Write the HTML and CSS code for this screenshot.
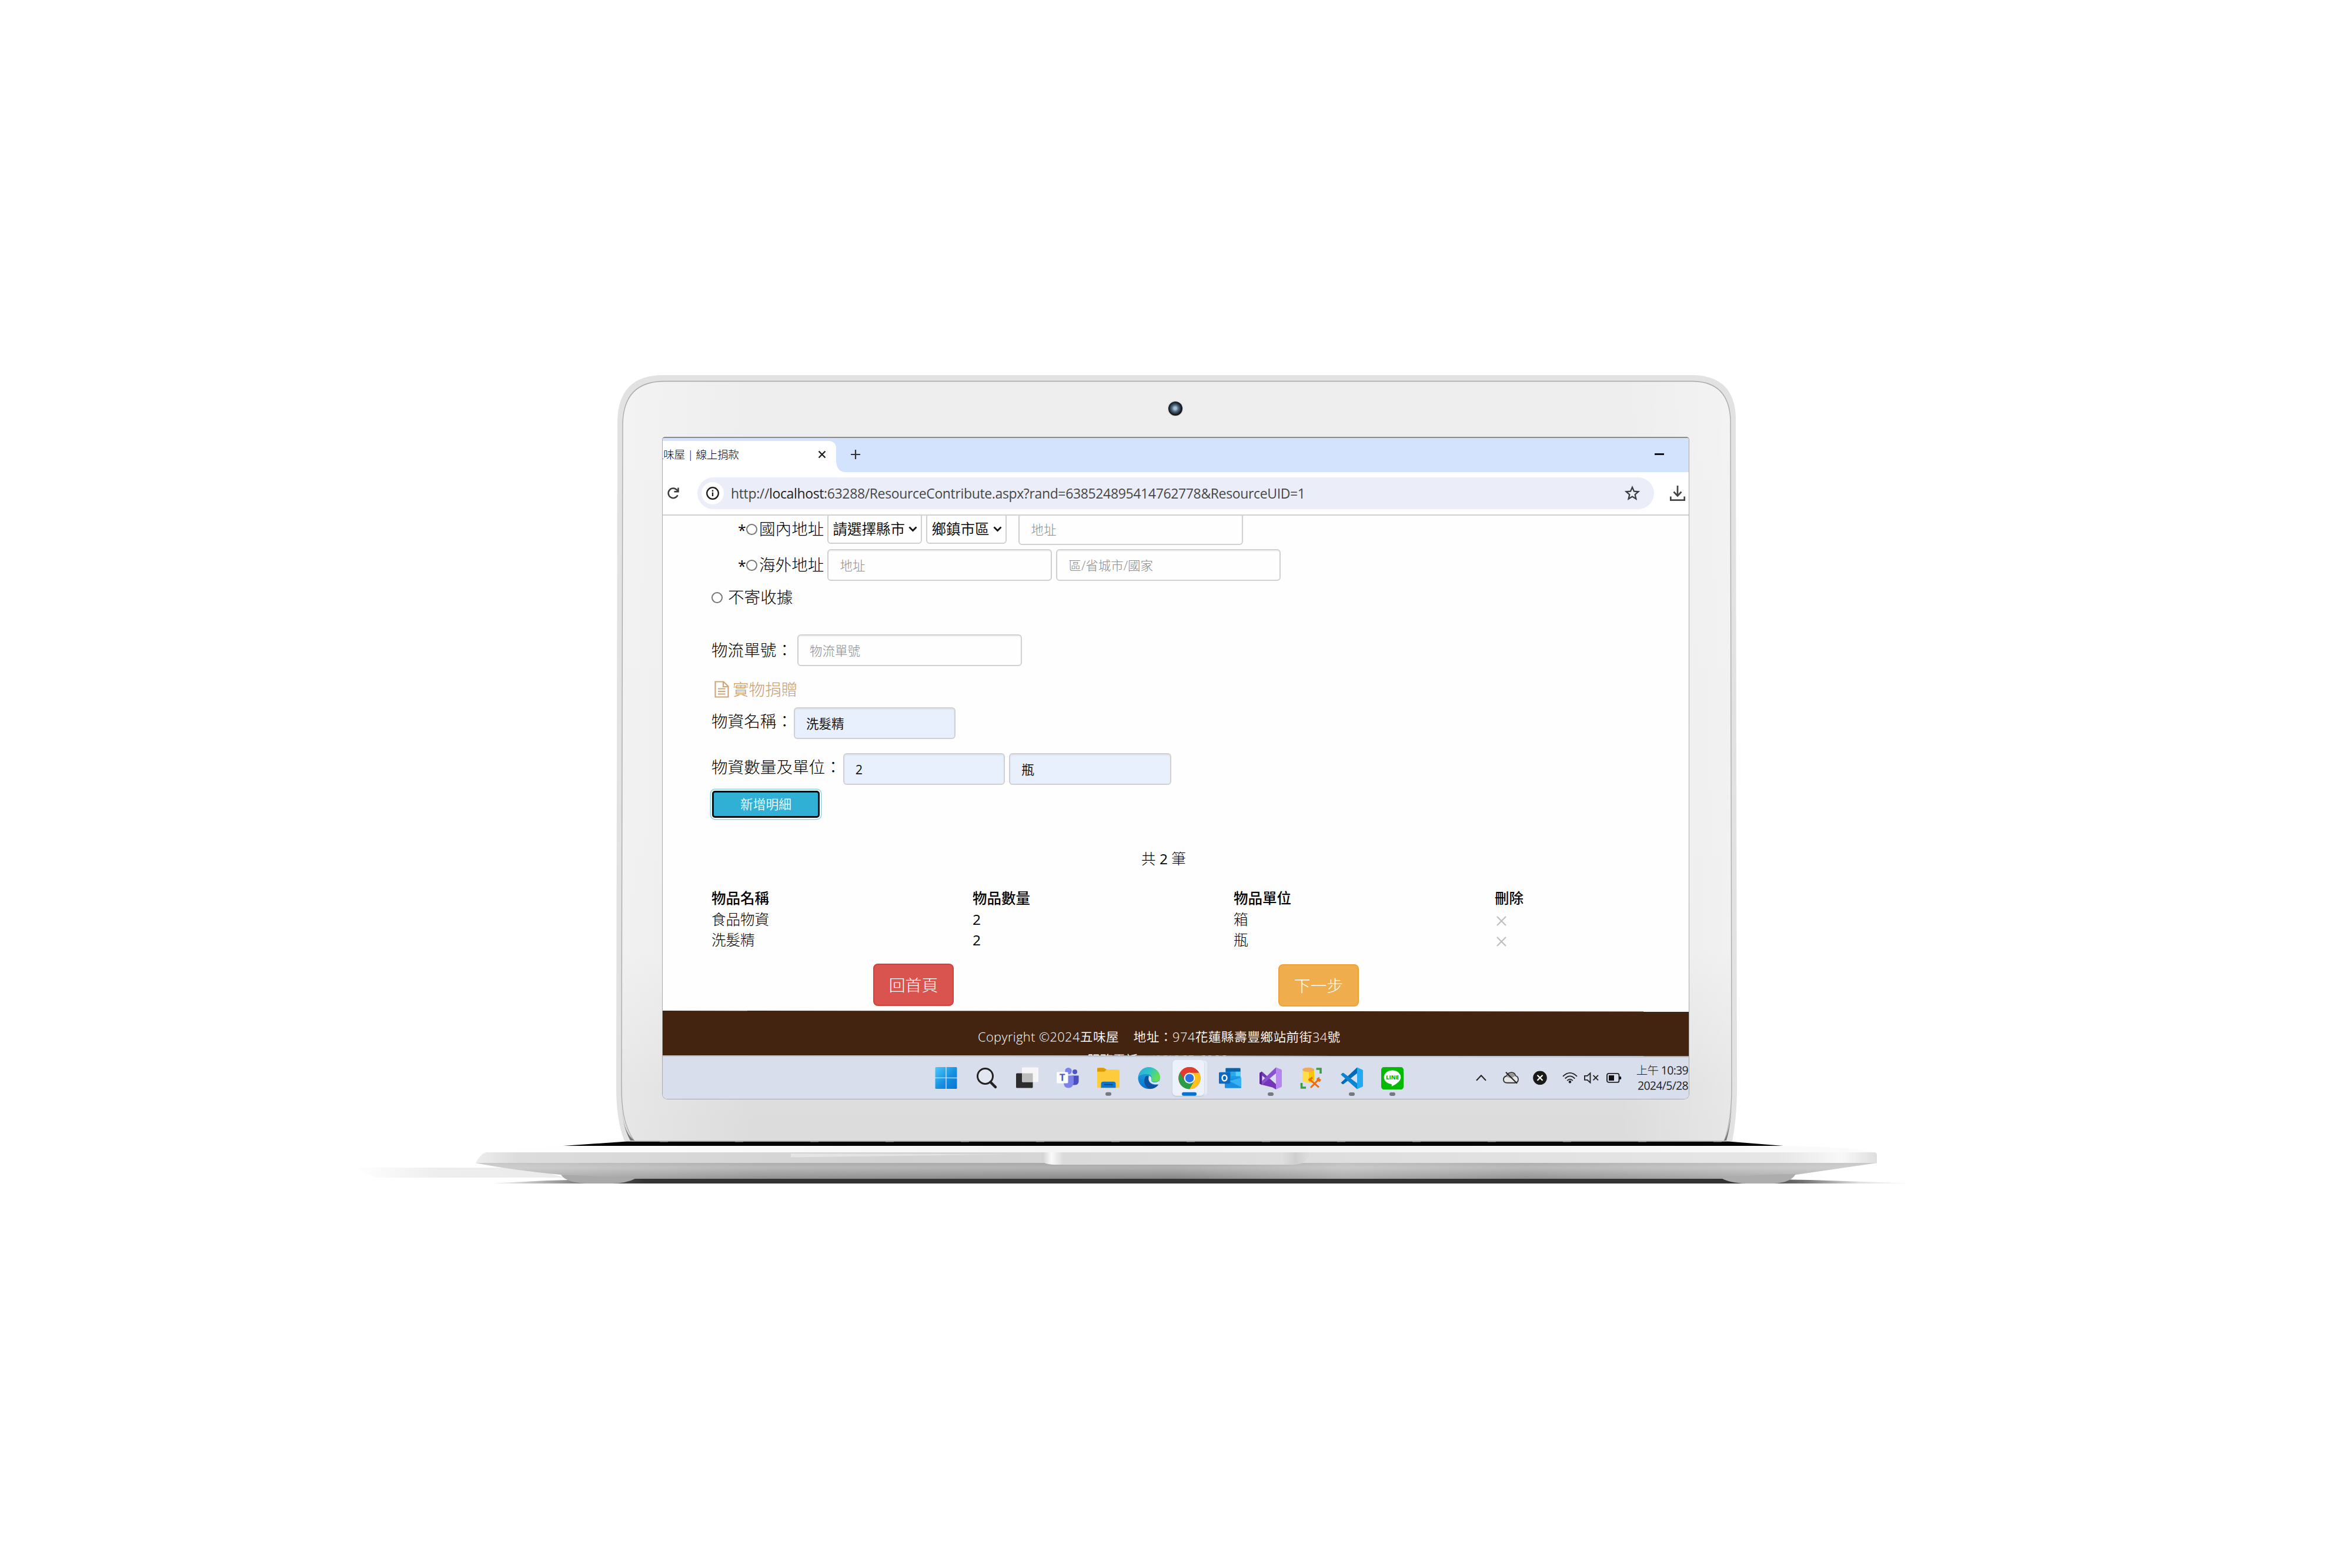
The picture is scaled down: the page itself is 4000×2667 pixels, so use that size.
FILE: index.html
```html
<!DOCTYPE html>
<html lang="zh-Hant">
<head>
<meta charset="utf-8">
<title>五味屋 | 線上捐款</title>
<link rel="stylesheet" href="styles.css">
</head>
<body>
<main class="laptop">
  <section class="lid">
    <svg class="lid-shape" viewBox="1040 630 1920 1320" width="1920" height="1320" aria-hidden="true">
      <defs>
        <linearGradient id="lidFace" x1="0" y1="0" x2="0" y2="1">
          <stop offset="0" stop-color="#eeeeee"/><stop offset=".75" stop-color="#ebebeb"/><stop offset=".93" stop-color="#dddddd"/><stop offset="1" stop-color="#dcdcdc"/>
        </linearGradient>
        <linearGradient id="lidSides" x1="0" y1="0" x2="1" y2="0">
          <stop offset="0" stop-color="#fff" stop-opacity=".3"/><stop offset=".12" stop-color="#fff" stop-opacity="0"/><stop offset=".9" stop-color="#fff" stop-opacity="0"/><stop offset="1" stop-color="#fff" stop-opacity=".3"/>
        </linearGradient>
      </defs>
      <path d="M1062 1941C1052 1915 1048 1885 1048 1850L1050 715Q1052 638 1128 638H2880Q2950 640 2952 710L2954 1850C2954 1890 2950 1920 2946 1941Z" fill="#e2e2e2"/>
      <path d="M1079 1941C1060 1915 1057 1880 1057 1850L1059 720Q1061 648.500 1130 648.500H2880Q2941 650 2943 715L2945 1850C2945 1890 2940 1920 2932 1941Z" fill="url(#lidFace)" stroke="#a9a9a9" stroke-width="1.300"/>
      <path d="M1079 1940C1060 1915 1058 1880 1058 1850L1060 720Q1062 650 1130 650H2880Q2940 651 2942 715L2944 1850C2944 1890 2940 1920 2932 1940Z" fill="url(#lidSides)"/>
      <path d="M1057 1880C1059 1912 1066 1930 1079 1940L1072 1940C1062 1922 1058 1900 1057 1880ZM2945 1880C2943 1912 2938 1930 2932 1940L2936 1940C2942 1920 2944 1900 2945 1880Z" fill="#777"/>
    </svg>
    <div class="camera"><span class="camera-lens"></span></div>
    <div class="screen">
      <header class="tabs">
        <div class="tab"><span class="tab-title">五味屋 | 線上捐款</span>
          <svg width="14" height="14" viewBox="0 0 14 14"><path d="M1.500 1.500l11 11m0-11l-11 11" stroke="#1f1f1f" stroke-width="2.400"/></svg>
        </div>
        <svg class="tab-curve" width="16" height="53" viewBox="0 0 16 53"><path d="M0 0V53H16Q2 53 0 36Z" fill="#fff"/></svg>
        <svg class="new-tab" width="18" height="18" viewBox="0 0 18 18"><path d="M9 1v16M1 9h16" stroke="#333" stroke-width="2.200"/></svg>
        <span class="minimise"></span>
      </header>
      <div class="toolbar">
        <svg class="reload" width="22" height="22" viewBox="0 0 22 22" fill="none" stroke="#3c3c3c" stroke-width="2.500"><path d="M18.500 14.200A8.300 8.300 0 1 1 17.300 5.500L19 7.500"/><path d="M19.500 1.500V8.300H12.500"/></svg>
        <div class="address">
          <span class="site-info"><svg width="24" height="24" viewBox="0 0 24 24"><circle cx="12" cy="12" r="9.800" fill="none" stroke="#1c1c1c" stroke-width="2.300"/><path d="M12 10.500v6.500M12 6.600v2.400" stroke="#1c1c1c" stroke-width="2.300"/></svg></span>
          <span class="url">http://<b>localhost</b>:63288/ResourceContribute.aspx?rand=638524895414762778&amp;ResourceUID=1</span>
          <svg class="star" width="26" height="26" viewBox="0 0 26 26"><path d="M13 2.800l3 6.900 7.300.6-5.600 4.900 1.700 7.300-6.400-3.900-6.400 3.900 1.700-7.300-5.600-4.900 7.300-.6z" fill="none" stroke="#3b3d40" stroke-width="2.300"/></svg>
        </div>
        <svg class="download" width="28" height="28" viewBox="0 0 28 28" fill="none" stroke="#444" stroke-width="2.700"><path d="M14 1v17M7.500 11.500L14 18.500l6.500-7M2.300 19.500v6.200h23.400v-6.200"/></svg>
      </div>
      <div class="page">
        <div class="row row-home indent">
          <span class="star-mark">*</span><i class="radio"></i><label class="label">國內地址</label>
          <div class="select select-city">請選擇縣市<svg width="15" height="10" viewBox="0 0 15 10"><path d="M1.500 1.500l6 6 6-6" fill="none" stroke="#111" stroke-width="2.800"/></svg></div>
          <div class="select select-town">鄉鎮市區<svg width="15" height="10" viewBox="0 0 15 10"><path d="M1.500 1.500l6 6 6-6" fill="none" stroke="#111" stroke-width="2.800"/></svg></div>
          <div class="input wide home-street">地址</div>
        </div>
        <div class="row row-abroad indent">
          <span class="star-mark">*</span><i class="radio"></i><label class="label">海外地址</label>
          <div class="input wide">地址</div>
          <div class="input wide">區/省城市/國家</div>
        </div>
        <div class="row row-none"><i class="radio"></i><label class="label spaced">不寄收據</label></div>
        <div class="row row-tracking"><label class="label">物流單號：</label><div class="input wide tracking">物流單號</div></div>
        <h2 class="section-title">
          <svg width="25" height="29" viewBox="0 0 25 29" fill="none" stroke="#cfa67a" stroke-width="2.200"><path d="M1.500 1.500H15.500L23.500 9.500V27.500H1.500Z"/><path d="M15 2V10H23M6 13.500h12.500M6 18h12.500M6 22.500h12.500"/></svg>實物捐贈
        </h2>
        <div class="row row-item"><label class="label">物資名稱：</label><div class="input filled item-name">洗髮精</div></div>
        <div class="row row-amount"><label class="label">物資數量及單位：</label><div class="input filled">2</div><div class="input filled">瓶</div></div>
        <button class="add">新增明細</button>
        <p class="count">共 <span class="num">2</span> 筆</p>
        <div class="table">
          <b>物品名稱</b><b>物品數量</b><b>物品單位</b><b>刪除</b>
          <span>食品物資</span><span class="num">2</span><span>箱</span><span class="remove"><svg width="17" height="17" viewBox="0 0 17 17"><path d="M1 1l15 15m0-15L1 16" stroke="#bdbdbd" stroke-width="2.200"/></svg></span>
          <span>洗髮精</span><span class="num">2</span><span>瓶</span><span class="remove"><svg width="17" height="17" viewBox="0 0 17 17"><path d="M1 1l15 15m0-15L1 16" stroke="#bdbdbd" stroke-width="2.200"/></svg></span>
        </div>
        <div class="actions"><button class="btn home">回首頁</button><button class="btn next">下一步</button></div>
      </div>
      <footer class="footer">
        <p class="copyright">Copyright ©2024五味屋&nbsp;&nbsp;&nbsp; 地址：974花蓮縣壽豐鄉站前街34號</p>
        <p class="phone">服務電話：(03)865-6922</p>
      </footer>
      <nav class="taskbar">
        <div class="apps">
          <div class="app"><svg width="38" height="38" viewBox="0 0 38 38"><defs><linearGradient id="win" x1="0" y1="0" x2="1" y2="1"><stop offset="0" stop-color="#4cc8fb"/><stop offset=".55" stop-color="#168fe0"/><stop offset="1" stop-color="#0673cf"/></linearGradient></defs><path d="M2 .5H18.300V18.300H.5V2Q.5.500 2 .5ZM19.700.500H36Q37.500.500 37.500 2V18.300H19.700ZM.5 19.700H18.300V37.500H2Q.5 37.500.5 36ZM19.700 19.700H37.500V36Q37.500 37.500 36 37.500H19.700Z" fill="url(#win)"/></svg></div>
          <div class="app"><svg width="38" height="38" viewBox="0 0 38 38" fill="none" stroke="#222"><circle cx="16.500" cy="16" r="13" stroke-width="3" fill="#e3e8f0"/><path d="M25.500 26l8.500 8.500" stroke-width="4.500" stroke-linecap="round"/></svg></div>
          <div class="app"><svg width="38" height="38" viewBox="0 0 38 38"><rect y="11" width="28.500" height="25" rx="1.500" fill="#2c2c2c"/><rect x="10" y="1" width="28" height="25" rx="1.500" fill="#f6f6f6"/><path d="M10 11H28.500V26H11.500Q10 26 10 24.500Z" fill="#bdbdbd"/></svg></div>
          <div class="app"><svg width="38" height="38" viewBox="0 0 38 38"><circle cx="31" cy="8.500" r="4" fill="#4f55c5"/><path d="M26 15H37.500V25Q37 31 31 31H26Z" fill="#4a50c0"/><circle cx="20" cy="7" r="5.700" fill="#7b83eb"/><path d="M12 15H29V27Q28 36 20 36T12 27Z" fill="#7b83eb"/><rect x="0" y="9" width="19.500" height="19" rx="1.500" fill="#fff"/><text x="9.700" y="24" text-anchor="middle" class="glyph-t">T</text></svg></div>
          <div class="app open"><svg width="38" height="38" viewBox="0 0 38 38"><path d="M0 3Q0 1.500 1.500 1.500H11L16 4.500H36Q38 4.500 38 6V35.500H0Z" fill="#fdcb3c"/><path d="M0 3Q0 1.500 1.500 1.500H11L16 4.500L12 8H0Z" fill="#dd9a08"/><path d="M6.500 35.500V29Q6.500 25 10.500 25H27.500Q31.500 25 31.500 29V35.500Z" fill="#0b77cc"/><path d="M11.500 30.200H26.500" stroke="#0a4c8c" stroke-width="2"/></svg></div>
          <div class="app"><svg width="38" height="38" viewBox="0 0 38 38"><defs><linearGradient id="edgeTop" x1="0" y1="0" x2="1" y2=".5"><stop offset="0" stop-color="#2ea8e0"/><stop offset=".5" stop-color="#2fc3c9"/><stop offset="1" stop-color="#66e04f"/></linearGradient><linearGradient id="edgeLow" x1="0" y1="0" x2="0" y2="1"><stop offset="0" stop-color="#27a6dc"/><stop offset="1" stop-color="#0670cf"/></linearGradient></defs><circle cx="19" cy="19" r="18.500" fill="url(#edgeLow)"/><path d="M1 16C3 5 11 .5 19 .5C30 .5 38 9 38 17C38 24 32 26 28 25.500C23 25 23 23 23.500 21.500C25 15 20 12 15 12C8 12 3 15 1 16Z" fill="url(#edgeTop)"/><path d="M12 19C9 27 14 36 21 37.500C28 37 33 34 35.500 29.500C29 32.500 20 30 19 23C18.500 20 19 18 17 15C14 15 12.500 17 12 19Z" fill="#10519b"/><path d="M19.500 15C24 17 23.500 20 23 22Q23 26.500 29 26.300Q34 26 37 22.500L35.500 29.500C27 31 20 28 18.500 22C18 18 19 16.500 19.500 15Z" fill="#dce5f0"/></svg></div>
          <div class="app active"><svg width="38" height="38" viewBox="0 0 38 38"><circle cx="19" cy="19" r="18.700" fill="#e33b2e"/><path d="M2.800 9.700A18.700 18.700 0 0 0 19 37.700L27 23.700H11Z" fill="#2a9c46"/><path d="M35.200 9.700A18.700 18.700 0 0 1 19 37.700L27.200 23.700 19 9.700Z" fill="#fcc21b"/><path d="M2.800 9.700L10.900 23.700 19 19V9.700Z" fill="#2a9c46"/><path d="M2.800 9.700A18.700 18.700 0 0 1 35.200 9.700H19A9.300 9.300 0 0 0 9.600 21.300Z" fill="#e33b2e"/><circle cx="19" cy="19" r="9.300" fill="#fff"/><circle cx="19" cy="19" r="7.300" fill="#2b73e8"/></svg></div>
          <div class="app"><svg width="38" height="38" viewBox="0 0 38 38"><rect x="11.500" y="2" width="25" height="28" rx="1.500" fill="#1689d8"/><path d="M11.500 2H36.500V8H11.500Z" fill="#0a62a9"/><path d="M20 8H28.500V16H20Z" fill="#2fa8ea"/><path d="M28.500 8H36.500V16H28.500Z" fill="#55d2fb"/><path d="M20 16H36.500V25H20Z" fill="#1b9ae6"/><path d="M10 22L38 18V34.500Q38 36 36.500 36H11.500Q10 36 10 34.500Z" fill="#1a8fe2"/><path d="M38 18V34.500L18 24Z" fill="#38b2f2"/><rect y="9" width="19" height="19.500" rx="1.500" fill="#0e6ac0"/><ellipse cx="9.500" cy="18.700" rx="4" ry="4.800" fill="none" stroke="#fff" stroke-width="2.400"/></svg></div>
          <div class="app open"><svg width="38" height="38" viewBox="0 0 38 38"><path d="M0 10L4 7.500 28 29V38L22 34.500 4 30 0 28Z" fill="#7337b5"/><path d="M4.500 14.500L10 19.200 4.500 25Z" fill="#d9dfed"/><path d="M0 28L4 30.500 28 10.500V.5L20 8Z" fill="#8b4fd1"/><path d="M0 10L4 8V30L0 28Z" fill="#5b2598"/><path d="M28 13L20 19.200 28 25.500Z" fill="#d9dfed"/><path d="M28 .5L37 4Q38 4.500 38 6V32Q38 33.500 37 34L28 38Z" fill="#b685f0"/></svg></div>
          <div class="app"><svg width="38" height="38" viewBox="0 0 38 38"><path d="M4 4.500V22Q4 26 14 26T24 22V4.500Z" fill="#ffdd4a"/><path d="M15 5H24V22Q22 26 15 26Z" fill="#fbc800"/><ellipse cx="14" cy="4.500" rx="10" ry="3.800" fill="#efaa55"/><path d="M27.500 3H35V11M2.500 27V35H10" fill="none" stroke="#3f9b43" stroke-width="3.600"/><path d="M18 35L33 19.500M15 20L32 34.500" stroke="#ef6c0c" stroke-width="3"/><path d="M13.500 22L20 16 22 19 16.500 24ZM28 19.500L33 16.500 32.500 21 36 20.500 34 25 29 24Z" fill="#ef6c0c"/></svg></div>
          <div class="app open"><svg width="38" height="38" viewBox="0 0 38 38"><path d="M28 .5L37 4.500Q38 5 38 6V32Q38 33 37 33.500L28 37.500Z" fill="#24a9f2"/><path d="M1 26L28 .5V10.500L5 28.800Q4 29.500 3 28.800L1 27.200Q0 26.500 1 26Z" fill="#0069b8"/><path d="M1 12L3 10Q4 9.300 5 10L28 27.500V37.500L1 13.500Q0 12.700 1 12Z" fill="#0a84d2"/></svg></div>
          <div class="app open"><svg width="38" height="38" viewBox="0 0 38 38"><rect width="38" height="38" rx="4.500" fill="#05b905"/><path d="M19 5.500C11 5.500 4.700 10.700 4.700 17.200C4.700 23 9.600 27.700 16.200 28.700C18.500 29.200 18 30.500 17.600 33C22 31 33.300 25 33.300 17.200C33.300 10.700 27 5.500 19 5.500Z" fill="#fff"/><text x="19" y="21" text-anchor="middle" class="glyph-line">LINE</text></svg></div>
        </div>
        <div class="tray">
          <svg class="t-up" width="18" height="12" viewBox="0 0 18 12"><path d="M1 10.500l8-8.500 8 8.500" fill="none" stroke="#222" stroke-width="2"/></svg>
          <svg class="t-cloud" width="27" height="22" viewBox="0 0 27 22"><path d="M7 19.500Q1 19.500 1 14Q1 9 6 8Q9 2 14.500 2Q20 2 21.500 7.500Q26 9 26 13.500Q26 19.500 20 19.500Z" fill="#e6e6e6" stroke="#333" stroke-width="1.800"/><path d="M6 9Q9 3 14.500 3Q20 3 20.500 8L14 12Z" fill="#999"/><path d="M5 1.500L24 20.500" stroke="#222" stroke-width="2"/></svg>
          <svg class="t-x" width="24" height="24" viewBox="0 0 24 24"><circle cx="12" cy="12" r="11.800" fill="#191919"/><path d="M7.500 7.500l9 9m0-9l-9 9" stroke="#fff" stroke-width="2.300"/></svg>
          <svg class="t-wifi" width="26" height="20" viewBox="0 0 26 20" fill="none" stroke="#222" stroke-width="1.900"><path d="M1 7.500Q13-4.500 25 7.500M4.700 11.200Q13 2.800 21.300 11.200M8.200 14.700Q13 9.800 17.800 14.700"/><circle cx="13" cy="16.800" r="1.800" fill="#222" stroke-width="1"/></svg>
          <svg class="t-mute" width="26" height="20" viewBox="0 0 26 20" fill="none" stroke="#222" stroke-width="1.900"><path d="M1 6.500H5.500L10.500 2V18L5.500 13.500H1ZM15.500 5.500l8.500 8.500m0-8.500l-8.500 8.500"/></svg>
          <svg class="t-battery" width="26" height="18" viewBox="0 0 26 18"><rect x="1" y="1.500" width="20.500" height="15" rx="3" fill="none" stroke="#222" stroke-width="1.900"/><rect x="4" y="4.500" width="9" height="9" fill="#111"/><path d="M22 6.500h2.500q1.500 2.500 0 5H22Z" fill="#111"/></svg>
          <div class="clock"><span class="time">上午 <span class="num">10:39</span></span><span>2024/5/28</span></div>
        </div>
      </nav>
    </div>
  </section>
  <svg class="base" viewBox="580 1940 2720 80" width="2720" height="80" aria-hidden="true">
    <defs>
      <linearGradient id="front" x1="0" y1="0" x2="1" y2="0"><stop offset="0" stop-color="#ededed"/><stop offset=".03" stop-color="#dcdcdc"/><stop offset=".3" stop-color="#d2d2d2"/><stop offset=".6" stop-color="#dedede"/><stop offset=".93" stop-color="#e6e6e6"/><stop offset=".975" stop-color="#f8f8f8"/><stop offset="1" stop-color="#dedede"/></linearGradient>
      <linearGradient id="under" x1="0" y1="0" x2="0" y2="1"><stop offset="0" stop-color="#a6a6a6"/><stop offset=".3" stop-color="#b2b2b2"/><stop offset="1" stop-color="#868686"/></linearGradient>
      <linearGradient id="underLight" x1="0" y1="0" x2="1" y2="0"><stop offset="0" stop-color="#fff" stop-opacity=".4"/><stop offset=".2" stop-color="#fff" stop-opacity=".1"/><stop offset=".5" stop-color="#fff" stop-opacity="0"/><stop offset=".62" stop-color="#fff" stop-opacity=".3"/><stop offset=".75" stop-color="#fff" stop-opacity=".1"/><stop offset="1" stop-color="#fff" stop-opacity=".4"/></linearGradient>
      <linearGradient id="ground" x1="0" y1="0" x2="1" y2="0"><stop offset="0" stop-color="#333" stop-opacity="0"/><stop offset=".08" stop-color="#333" stop-opacity=".8"/><stop offset=".11" stop-color="#333"/><stop offset=".88" stop-color="#333"/><stop offset=".92" stop-color="#333" stop-opacity=".7"/><stop offset=".96" stop-color="#333" stop-opacity=".15"/><stop offset="1" stop-color="#333" stop-opacity="0"/></linearGradient>
      <linearGradient id="haze" x1="0" y1="0" x2="1" y2="0"><stop offset="0" stop-color="#eee" stop-opacity="0"/><stop offset=".4" stop-color="#eee"/><stop offset="1" stop-color="#ebebeb"/></linearGradient>
      <linearGradient id="deck" x1="0" y1="0" x2="1" y2="0"><stop offset="0" stop-color="#fff"/><stop offset=".5" stop-color="#f3f3f3"/><stop offset="1" stop-color="#fbfbfb"/></linearGradient>
      <linearGradient id="notch" x1="0" y1="0" x2="1" y2="0"><stop offset="0" stop-color="#d0d0d0"/><stop offset=".035" stop-color="#fafafa"/><stop offset=".08" stop-color="#dadada"/><stop offset=".9" stop-color="#dedede"/><stop offset=".95" stop-color="#cfcfcf"/><stop offset="1" stop-color="#dcdcdc"/></linearGradient>
    </defs>
    <path d="M600 1986H900L960 2003H640Z" fill="url(#haze)"/>
    <path d="M830 2013L930 2008 1060 2004.500H2950L3080 2007 3260 2013Z" fill="url(#ground)"/>
    <path d="M822 1960Q880 1950 953 1949L1060 1940H2945L3031 1949Q3140 1950 3190 1960Z" fill="url(#deck)"/>
    <path d="M958 1949L1066 1941.500H2940L3033 1949Z" fill="#050505"/>
    <path d="M1066 1941.500H2940" stroke="#dfe3e2" stroke-width="1.600" stroke-dasharray="14 114" stroke-dashoffset="-184"/>
    <path d="M809 1978H3192L3054 1998Q2960 2005 2920 2005H1090Q1010 2004 954 1998Q870 1990 809 1978Z" fill="url(#under)"/>
    <path d="M809 1978H3192L3054 1998Q2960 2005 2920 2005H1090Q1010 2004 954 1998Q870 1990 809 1978Z" fill="url(#underLight)"/>
    <path d="M826 1960H3189Q3192 1961 3192 1964V1978H809Q816 1964 826 1960Z" fill="url(#front)"/>
    <path d="M1345 1962L1720 1963.500L1345 1968.500Z" fill="#e4e4e4"/>
    <path d="M1772 1960H2226Q2225 1980 2200 1981H1800Q1774 1981 1772 1974Z" fill="url(#notch)"/>
    <path d="M954 1998Q980 1999 1082 2004Q1065 2013 1040 2013H995Q962 2011 954 1998Z" fill="#a9a9a9"/>
    <path d="M2928 2004Q2990 1997 3054 1997Q3045 2013 3010 2013H2970Q2940 2012 2928 2004Z" fill="#adadad"/>
  </svg>
</main>
</body>
</html>
```

FILE: styles.css
```css
* { box-sizing: border-box; }
body { margin: 0; width: 4000px; height: 2667px; overflow: hidden; background: #fff; font-family: "Open Sans", "Noto Sans CJK TC", sans-serif; font-weight: 300; color: #000; }
p, h2 { margin: 0; font-weight: inherit; }
svg { display: block; flex: none; }
.laptop { width: 2720px; margin-left: 580px; padding-top: 638px; }
.lid { position: relative; width: 1904px; height: 1302px; margin-left: 469px; padding: 0 0 0 77px; }
.lid-shape { position: absolute; left: -9px; top: -8px; }
.camera { position: relative; height: 105px; padding: 45px 0 0 861px; }
.camera-lens { display: block; width: 24px; height: 24px; border-radius: 50%; background: radial-gradient(circle at 48% 48%, #a9c0d0 0 12%, #4c6b84 32%, #26323f 52%, #15171b 62%); box-shadow: 0 0 2px #888; }
.screen { position: relative; width: 1747px; height: 1127px; overflow: hidden; display: flex; flex-direction: column; background: #fefefe; border: 1px solid #aaa; border-top: 2px solid #8b8b8b; border-radius: 5px 5px 9px 9px; }
.num { font-weight: 400; }

.tabs { display: flex; align-items: center; flex: none; height: 58px; padding-top: 5px; background: #d3e3fd; }
.tab { display: flex; align-items: center; justify-content: space-between; width: 295px; height: 53px; padding: 0 17px 8px 0; background: #fff; border-radius: 0 12px 0 0; }
.tab-title { margin-left: -17px; font-size: 18.700px; line-height: 24px; letter-spacing: -.4px; white-space: nowrap; }
.new-tab { margin: 0 0 8px 8px; }
.minimise { width: 16px; height: 3px; margin: 0 42px 9px auto; background: #111; }

.toolbar { display: flex; align-items: center; flex: none; height: 74px; padding-left: 7px; background: #fff; border-bottom: 2px solid #d2d2d2; }
.address { display: flex; align-items: center; width: 1627px; height: 54px; margin-left: 30px; padding-left: 7px; border-radius: 27px; background: #ebeef8; }
.site-info { display: flex; align-items: center; justify-content: center; width: 38px; height: 38px; border-radius: 50%; background: #fff; }
.url { margin-left: 12px; font-size: 23px; line-height: 30px; font-weight: 400; letter-spacing: -.36px; white-space: nowrap; color: #474747; }
.url b { font-weight: 400; color: #1f1f1f; }
.star { margin: 0 24px 0 auto; }
.download { margin-left: 26px; }

.page { flex: none; height: 842px; overflow: hidden; padding-left: 83px; }
.row { display: flex; align-items: center; height: 54px; }
.indent { padding-left: 48px; }
.row-home { margin-top: -4px; }
.row-abroad { margin-top: 7px; }
.row-none { height: 30px; margin-top: 13px; }
.row-tracking { margin-top: 48px; }
.row-item { margin-top: 16px; }
.row-amount { margin-top: 24px; }
.star-mark { flex: none; width: 14px; margin-left: -3px; padding-top: 1px; font-size: 25px; line-height: 30px; font-weight: 400; }
.radio { flex: none; width: 19px; height: 19px; border: 2px solid #767676; border-radius: 50%; background: #fff; }
.label { margin-left: 3px; font-size: 27.600px; line-height: 34px; padding-bottom: 3px; white-space: nowrap; }
.row-none .label { margin-left: 9px; }
.row-tracking .label, .row-item .label, .row-amount .label { margin-left: 0; }
.row-item .label, .row-amount .label { padding-bottom: 8px; }
.select { display: flex; align-items: center; justify-content: space-between; height: 52px; margin: 0 7px 3px 0; padding: 2px 6px 0 7px; border: 2px solid #d0d0d0; border-radius: 6px; font-size: 24.500px; line-height: 30px; font-weight: 350; white-space: nowrap; }
.select-city { width: 161px; margin-left: 6px; }
.select-town { width: 137px; }
.input { width: 275px; height: 54px; padding: 3px 0 0 19px; border: 2px solid #d0d0d0; border-radius: 6px; font-size: 21.500px; line-height: 46px; white-space: nowrap; color: #8c8c8c; box-shadow: inset 0 2px 2px rgba(0,0,0,.05); }
.input + .input { margin-left: 7px; }
.wide { width: 382px; }
.home-street { margin-left: 13px; }
.row-abroad .label + .input { margin-left: 6px; }
.tracking { margin-left: 8px; }
.filled { width: 275.500px; background: #e8f0fe; color: #111; font-weight: 400; }
.item-name { margin-left: 2px; }
.row-amount .label + .input { margin-left: 3px; }
.section-title { display: flex; align-items: center; gap: 6px; height: 29px; margin-top: 25px; padding-left: 5px; font-size: 27.600px; line-height: 29px; color: #c99c6c; }
button { display: block; padding: 0; font-family: inherit; font-weight: 300; color: #fff; }
.add { width: 183px; height: 46px; margin: 10px 0 0 1px; border: 3px solid #101010; border-radius: 5px; background: #31b0d5; font-size: 21.700px; line-height: 38px; font-weight: 350; box-shadow: 0 0 0 2px #fff, 0 0 0 3.500px #8fd3e8; }
.count { margin: 55px 0 0 731px; font-size: 24.500px; line-height: 30px; }
.table { display: grid; grid-template-columns: repeat(4, 444px); grid-auto-rows: 35.700px; margin-top: 34px; font-size: 24.500px; line-height: 35px; }
.table b { font-weight: 500; }
.remove { padding: 12px 0 0 3px; }
.actions { display: flex; gap: 552px; padding: 22px 0 0 275px; }
.btn { width: 137px; height: 72px; border: 2px solid; border-radius: 8px; font-size: 27.800px; line-height: 66px; }
.home { background: #d9534f; border-color: #d43f3a; }
.next { margin-top: 1px; background: #f0ad4e; border-color: #eea236; }

.footer { flex: none; height: 76px; overflow: hidden; margin-right: -4px; padding-top: 28px; background: #432411; color: #fff; transform: skewY(.05deg); transform-origin: 0 0; }
.copyright { margin-left: 536px; font-size: 21.700px; line-height: 32px; letter-spacing: .46px; white-space: nowrap; font-weight: 350; }
.phone { margin: 7px 0 0 722px; font-size: 21.700px; line-height: 32px; white-space: nowrap; font-weight: 400; }
.taskbar { flex: none; display: flex; height: 80px; margin-right: -4px; padding-left: 447px; background: #d8deec; border-top: 2px solid #bcc3d1; transform: skewY(.05deg); transform-origin: 0 0; }
.apps { display: flex; }
.app { position: relative; width: 69px; height: 72px; padding: 17px 0 0 15.500px; }
.open::after { content: ""; position: absolute; left: 30px; top: 60px; width: 10px; height: 6px; border-radius: 3px; background: #76797f; }
.active::before { content: ""; position: absolute; left: 6px; top: 5px; width: 54px; height: 61px; border-radius: 6px; background: #edf1fa; box-shadow: 0 1px 2px #b9c0ce, 6px 0 0 -1px #e6ebf5; }
.active::after { content: ""; position: absolute; left: 22px; top: 60px; width: 25px; height: 6px; border-radius: 3px; background: #0a73d0; }
.active svg { position: relative; }
.glyph-t { font: 700 17px "Open Sans", sans-serif; fill: #5059c9; }
.glyph-line { font: 800 9.500px "Open Sans", sans-serif; fill: #05b905; }
.tray { display: flex; align-items: center; height: 72px; margin-left: 108px; padding-bottom: 2px; }
.t-cloud { margin-left: 28px; }
.t-x { margin-left: 24px; }
.t-wifi { margin-left: 26px; }
.t-mute { margin-left: 11px; }
.t-battery { margin-left: 12px; }
.clock { display: flex; flex-direction: column; align-items: flex-end; width: 90px; margin-left: 23px; font-size: 19.500px; line-height: 26px; font-weight: 400; letter-spacing: -.7px; white-space: nowrap; color: #222; }
.time { font-weight: 300; }
```
